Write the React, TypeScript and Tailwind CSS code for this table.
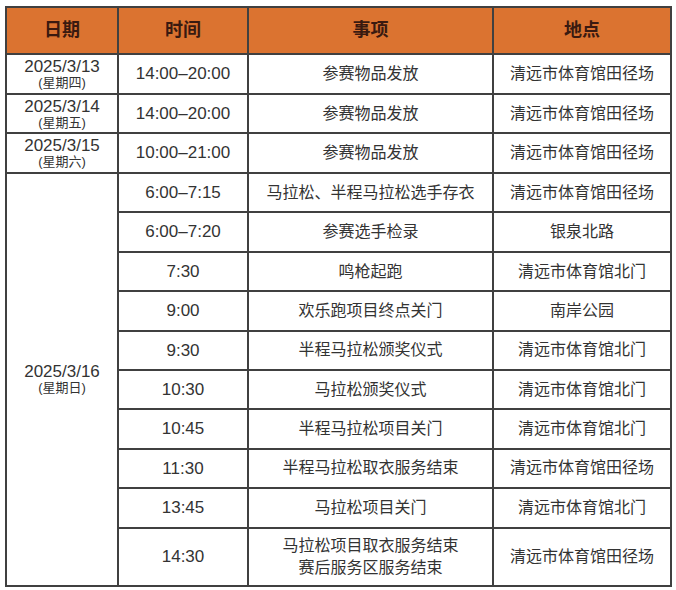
import React from "react";

const font = { fontFamily: '"Liberation Sans", "Noto Sans CJK SC", "Noto Sans", sans-serif' };

const early = [
  { date: "2025/3/13", week: "(星期四)", time: "14:00–20:00", item: "参赛物品发放", place: "清远市体育馆田径场" },
  { date: "2025/3/14", week: "(星期五)", time: "14:00–20:00", item: "参赛物品发放", place: "清远市体育馆田径场" },
  { date: "2025/3/15", week: "(星期六)", time: "10:00–21:00", item: "参赛物品发放", place: "清远市体育馆田径场" },
];

const raceDay: { time: string; item: string[]; place: string }[] = [
  { time: "6:00–7:15", item: ["马拉松、半程马拉松选手存衣"], place: "清远市体育馆田径场" },
  { time: "6:00–7:20", item: ["参赛选手检录"], place: "银泉北路" },
  { time: "7:30", item: ["鸣枪起跑"], place: "清远市体育馆北门" },
  { time: "9:00", item: ["欢乐跑项目终点关门"], place: "南岸公园" },
  { time: "9:30", item: ["半程马拉松颁奖仪式"], place: "清远市体育馆北门" },
  { time: "10:30", item: ["马拉松颁奖仪式"], place: "清远市体育馆北门" },
  { time: "10:45", item: ["半程马拉松项目关门"], place: "清远市体育馆北门" },
  { time: "11:30", item: ["半程马拉松取衣服务结束"], place: "清远市体育馆田径场" },
  { time: "13:45", item: ["马拉松项目关门"], place: "清远市体育馆北门" },
  { time: "14:30", item: ["马拉松项目取衣服务结束", "赛后服务区服务结束"], place: "清远市体育馆田径场" },
];

const td = "border-2 border-[#404040] text-center align-middle p-0";

function DateCell({ date, week }: { date: string; week: string }) {
  return (
    <>
      <div className="text-[17px] leading-[18px]">{date}</div>
      <div className="text-[13px] leading-[14px]">{week}</div>
    </>
  );
}

export default function App() {
  return (
    <div className="bg-white w-[676px] h-[590px] pt-[6px] pl-[5px]" style={font}>
      <table className="table-fixed border-collapse w-[665px] text-[16px] text-[#333333]">
        <colgroup>
          <col className="w-[112px]" />
          <col className="w-[130px]" />
          <col className="w-[245px]" />
          <col className="w-[178px]" />
        </colgroup>
        <thead>
          <tr className="h-[47px] bg-[#db7330] text-[#3a1a10] text-[18px] font-bold">
            <th className={td}>日期</th>
            <th className={td}>时间</th>
            <th className={td}>事项</th>
            <th className={td}>地点</th>
          </tr>
        </thead>
        <tbody>
          {early.map((r) => (
            <tr key={r.date} className="h-[39.7px]">
              <td className={td}>
                <DateCell date={r.date} week={r.week} />
              </td>
              <td className={td + " text-[17px]"}>{r.time}</td>
              <td className={td}>{r.item}</td>
              <td className={td}>{r.place}</td>
            </tr>
          ))}
          {raceDay.map((r, i) => (
            <tr key={r.time} className={i === raceDay.length - 1 ? "h-[58px]" : "h-[39.4px]"}>
              {i === 0 && (
                <td className={td} rowSpan={raceDay.length}>
                  <DateCell date="2025/3/16" week="(星期日)" />
                </td>
              )}
              <td className={td + " text-[17px]"}>{r.time}</td>
              <td className={td + " leading-[22px]"}>
                {r.item.map((t) => (
                  <div key={t}>{t}</div>
                ))}
              </td>
              <td className={td}>{r.place}</td>
            </tr>
          ))}
        </tbody>
      </table>
    </div>
  );
}
